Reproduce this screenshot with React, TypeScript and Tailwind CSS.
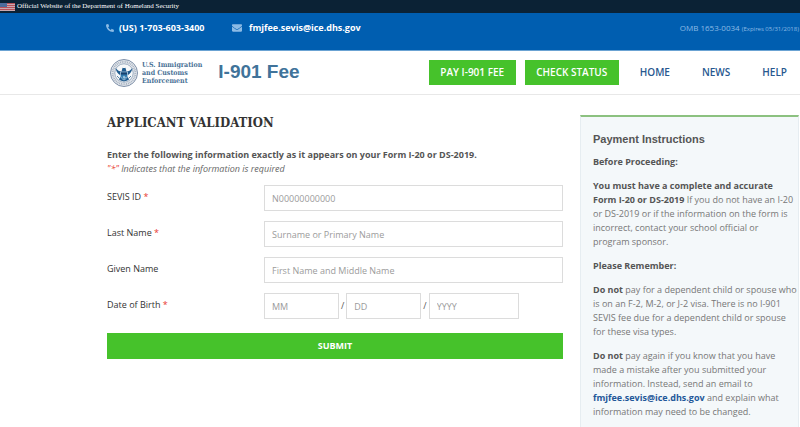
import React from 'react'
import { FaPhone, FaEnvelope } from 'react-icons/fa'

const MAIL = 'fmjfee.sevis@ice.dhs.gov'

const navLinks = [
  { label: 'HOME', href: '#home' },
  { label: 'NEWS', href: '#news' },
  { label: 'HELP', href: '#help' },
]

const textFields = [
  { id: 'sevis-id', label: 'SEVIS ID', placeholder: 'N00000000000', required: true },
  { id: 'last-name', label: 'Last Name', placeholder: 'Surname or Primary Name', required: true },
  { id: 'given-name', label: 'Given Name', placeholder: 'First Name and Middle Name', required: false },
]

const inputClass =
  'h-[26px] min-w-0 rounded-none border border-[#dcdcdc] bg-white px-[7px] text-[9px] text-[#555] placeholder:text-[#9b9b9b] focus:outline-none focus:border-[#005eb0]'

function Flag() {
  return (
    <svg className="h-2 w-[15px]" viewBox="0 0 15 8" aria-hidden="true">
      <rect width="15" height="8" fill="#c9a9b0" />
      {[0, 2, 4, 6].map((y) => (
        <rect key={y} y={y} width="15" height="1" fill="#b8505a" />
      ))}
      <rect width="7" height="4" fill="#4d6c9c" />
    </svg>
  )
}

function Seal() {
  return (
    <svg className="size-7 shrink-0" viewBox="0 0 56 56" aria-hidden="true">
      <circle cx="28" cy="28" r="27" fill="#e6eaef" stroke="#7f90a8" strokeWidth="2" />
      <circle cx="28" cy="28" r="22.5" fill="none" stroke="#a9b3c1" strokeWidth="4" strokeDasharray="2 1.6" />
      <circle cx="28" cy="28" r="18.5" fill="#f6f8fa" stroke="#8295ad" strokeWidth="1.5" />
      {/* eagle */}
      <path
        d="M11 18c2 9 6 13 11 15l-4 8c3 2 6 3 10 4 4-1 7-2 10-4l-4-8c5-2 9-6 11-15-4 5-8 7-12 7l-2-7-3-3-3 3-2 7c-4 0-8-2-12-7z"
        fill="#1f5b8e"
      />
      <path d="M21 26h14v7c0 4-3 7-7 9-4-2-7-5-7-9z" fill="#2c78ad" stroke="#dfe9f1" strokeWidth="1.2" />
      <path d="M22 27h12v4H22z" fill="#17406c" />
      <path d="M25 36l3-3 4 4-4 3z" fill="#9cc4de" />
      <path d="M26 15l2-2 3 2-1 3h-4z" fill="#f4f6f8" />
      <path d="M14 34l5 5M42 34l-5 5" stroke="#5f87a6" strokeWidth="2" />
    </svg>
  )
}

function Required() {
  return <span className="text-[#e8392f]">*</span>
}

function Header() {
  return (
    <header>
      <div className="flex h-[13px] items-center gap-[2px] bg-[#0b2235] font-['Liberation_Serif',serif] text-[7px] text-white">
        <Flag />
        <span>Official Website of the Department of Homeland Security</span>
      </div>

      <div className="flex h-[38px] items-start border-b border-[#6ba3d3] bg-[#005eb0] pl-[106px] pr-px pt-2 text-[9px] leading-[14px] text-white">
        <a href="tel:+17036033400" className="flex w-[126px] items-center gap-[5px] font-bold">
          <FaPhone className="size-2 -scale-x-100 text-[#8cbbe5]" />
          (US) 1-703-603-3400
        </a>
        <a href={`mailto:${MAIL}`} className="flex items-center gap-[7px] font-bold">
          <FaEnvelope className="size-[10px] text-[#8cbbe5]" />
          {MAIL}
        </a>
        <p className="ml-auto text-[8px] text-[#8cbbe5]">
          OMB 1653-0034 <span className="text-[6px]">(Expires 05/31/2018)</span>
        </p>
      </div>

      <div className="flex h-11 items-center border-b border-[#e8e8e8] pl-[110px] pr-[13px]">
        <a href="#home" className="flex items-center gap-1">
          <Seal />
          <span className="font-['DejaVu_Serif_Condensed','DejaVu_Serif',serif] text-[7px] leading-[8px] font-bold text-[#4a7296]">
            U.S. Immigration
            <br />
            and Customs
            <br />
            Enforcement
          </span>
        </a>
        <span className="ml-4 font-['Liberation_Sans',sans-serif] text-[19px] font-bold text-[#40739a]">
          I-901 Fee
        </span>
        <nav className="ml-auto flex items-center text-[10px] font-semibold text-[#28588f]">
          <button type="button" className="h-[25px] w-[87px] bg-[#46c22b] text-white">
            PAY I-901 FEE
          </button>
          <button type="button" className="ml-[9px] h-[25px] w-[94px] bg-[#46c22b] text-white">
            CHECK STATUS
          </button>
          <div className="ml-[21px] flex gap-8">
            {navLinks.map((link) => (
              <a key={link.label} href={link.href}>
                {link.label}
              </a>
            ))}
          </div>
        </nav>
      </div>
    </header>
  )
}

function ValidationForm() {
  return (
    <main className="min-w-0 flex-1 text-[9px]">
      <h1 className="font-['DejaVu_Serif_Condensed','DejaVu_Serif',serif] text-[13px] leading-4 font-bold text-[#333]">
        APPLICANT VALIDATION
      </h1>
      <p className="mt-[17px] leading-[14px] font-bold text-[#555]">
        Enter the following information exactly as it appears on your Form I-20 or DS-2019.
      </p>
      <p className="leading-[14px] text-[#666] italic">
        <span className="text-[#e8392f]">"*"</span> Indicates that the information is required
      </p>

      <form className="mt-[9px]" onSubmit={(e) => e.preventDefault()}>
        <div className="flex flex-col gap-[10px]">
          {textFields.map((field) => (
            <div key={field.id} className="flex">
              <label htmlFor={field.id} className="w-[157px] shrink-0 pt-[5px] leading-[14px] text-[#333]">
                {field.label} {field.required && <Required />}
              </label>
              <input id={field.id} type="text" placeholder={field.placeholder} className={`${inputClass} flex-1`} />
            </div>
          ))}

          <div className="flex">
            <label htmlFor="dob-month" className="w-[157px] shrink-0 pt-[5px] leading-[14px] text-[#333]">
              Date of Birth <Required />
            </label>
            <div className="flex items-center gap-[2px] text-[#555]">
              <input id="dob-month" type="text" placeholder="MM" className={`${inputClass} w-[75px]`} />
              <span>/</span>
              <input aria-label="Day of birth" type="text" placeholder="DD" className={`${inputClass} w-[75px]`} />
              <span>/</span>
              <input aria-label="Year of birth" type="text" placeholder="YYYY" className={`${inputClass} w-[90px]`} />
            </div>
          </div>
        </div>

        <button type="submit" className="mt-[14px] h-[26px] w-full bg-[#46c22b] font-bold text-white">
          SUBMIT
        </button>
      </form>
    </main>
  )
}

function Instructions() {
  return (
    <aside className="w-[219px] shrink-0 border border-t-2 border-[#e6edf1] border-t-[#8cc180] bg-[#f4f8fa] pt-[14px] pb-2 pl-3 text-[9px] leading-[14px] text-[#777]">
      <h2 className="font-['Liberation_Sans',sans-serif] text-[11px] leading-4 font-bold text-[#555]">
        Payment Instructions
      </h2>
      <div className="mt-2 flex flex-col gap-[10px] [&_strong]:text-[#555]">
        <p>
          <strong>Before Proceeding:</strong>
        </p>
        <p>
          <strong>
            You must have a complete and accurate
            <br />
            Form I-20 or DS-2019
          </strong>{' '}
          If you do not have an <span className="whitespace-nowrap">I-20</span>
          <br />
          or DS-2019 or if the information on the form is
          <br />
          incorrect, contact your school official or
          <br />
          program sponsor.
        </p>
        <p>
          <strong>Please Remember:</strong>
        </p>
        <p>
          <strong>Do not</strong> pay for a dependent child or spouse who
          <br />
          is on an F-2, M-2, or J-2 visa. There is no <span className="whitespace-nowrap">I-901</span>
          <br />
          SEVIS fee due for a dependent child or spouse
          <br />
          for these visa types.
        </p>
        <p>
          <strong>Do not</strong> pay again if you know that you have
          <br />
          made a mistake after you submitted your
          <br />
          information. Instead, send an email to
          <br />
          <a href={`mailto:${MAIL}`} className="font-bold text-[#1f5799]">
            {MAIL}
          </a>{' '}
          and explain what
          <br />
          information may need to be changed.
        </p>
      </div>
    </aside>
  )
}

export default function App() {
  return (
    <div className="min-h-screen bg-white font-['Open_Sans',sans-serif]">
      <Header />
      <div className="flex items-start gap-[17px] pt-5 pr-px pl-[107px]">
        <ValidationForm />
        <Instructions />
      </div>
    </div>
  )
}
